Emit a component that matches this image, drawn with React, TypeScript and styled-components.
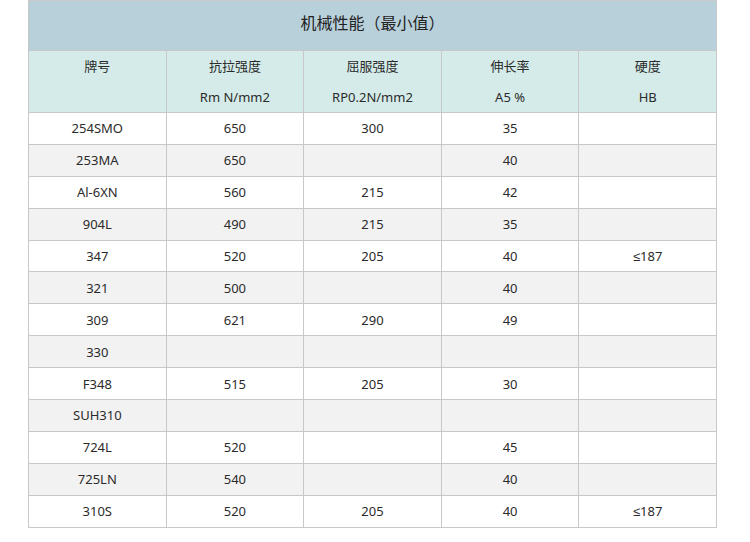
import React from 'react'
import styled, { createGlobalStyle } from 'styled-components'

const GlobalStyle = createGlobalStyle`
  body {
    margin: 0;
    background: #ffffff;
    font-family: "Noto Sans", "Liberation Sans", "Noto Sans CJK SC", sans-serif;
  }
`

const Page = styled.div`
  padding: 0 33px 16px 28px;
`

const Table = styled.table`
  width: 689px;
  border-collapse: collapse;
  table-layout: fixed;
  color: #2b2b2b;
  font-size: 13px;
  text-align: center;
`

const TitleCell = styled.th`
  height: 41px;
  padding: 0 0 8px;
  background: #b8d0da;
  border: 1px solid #c8c8c8;
  font-size: 16px;
  font-weight: normal;
  color: #222222;
`

const HeadCell = styled.th`
  height: 61px;
  padding: 0;
  background: #d4ebe9;
  border: 1px solid #c8c8c8;
  font-weight: normal;
  vertical-align: top;
`

const HeadLine = styled.div`
  height: 30.5px;
  line-height: 30px;
`

const Row = styled.tr<{ $striped: boolean }>`
  background: ${(p) => (p.$striped ? '#f2f2f2' : '#ffffff')};
`

const Cell = styled.td`
  height: 30.9px;
  padding: 0;
  border: 1px solid #c8c8c8;
`

const heads = [
  ['牌号', ''],
  ['抗拉强度', 'Rm N/mm2'],
  ['屈服强度', 'RP0.2N/mm2'],
  ['伸长率', 'A5 %'],
  ['硬度', 'HB'],
]

const rows = [
  ['254SMO', '650', '300', '35', ''],
  ['253MA', '650', '', '40', ''],
  ['Al-6XN', '560', '215', '42', ''],
  ['904L', '490', '215', '35', ''],
  ['347', '520', '205', '40', '≤187'],
  ['321', '500', '', '40', ''],
  ['309', '621', '290', '49', ''],
  ['330', '', '', '', ''],
  ['F348', '515', '205', '30', ''],
  ['SUH310', '', '', '', ''],
  ['724L', '520', '', '45', ''],
  ['725LN', '540', '', '40', ''],
  ['310S', '520', '205', '40', '≤187'],
]

export default function App() {
  return (
    <Page>
      <GlobalStyle />
      <Table>
        <thead>
          <tr>
            <TitleCell colSpan={5}>机械性能（最小值）</TitleCell>
          </tr>
          <tr>
            {heads.map(([a, b]) => (
              <HeadCell key={a}>
                <HeadLine>{a}</HeadLine>
                <HeadLine>{b}</HeadLine>
              </HeadCell>
            ))}
          </tr>
        </thead>
        <tbody>
          {rows.map((r, i) => (
            <Row key={r[0]} $striped={i % 2 === 1}>
              {r.map((v, j) => (
                <Cell key={j}>{v}</Cell>
              ))}
            </Row>
          ))}
        </tbody>
      </Table>
    </Page>
  )
}
